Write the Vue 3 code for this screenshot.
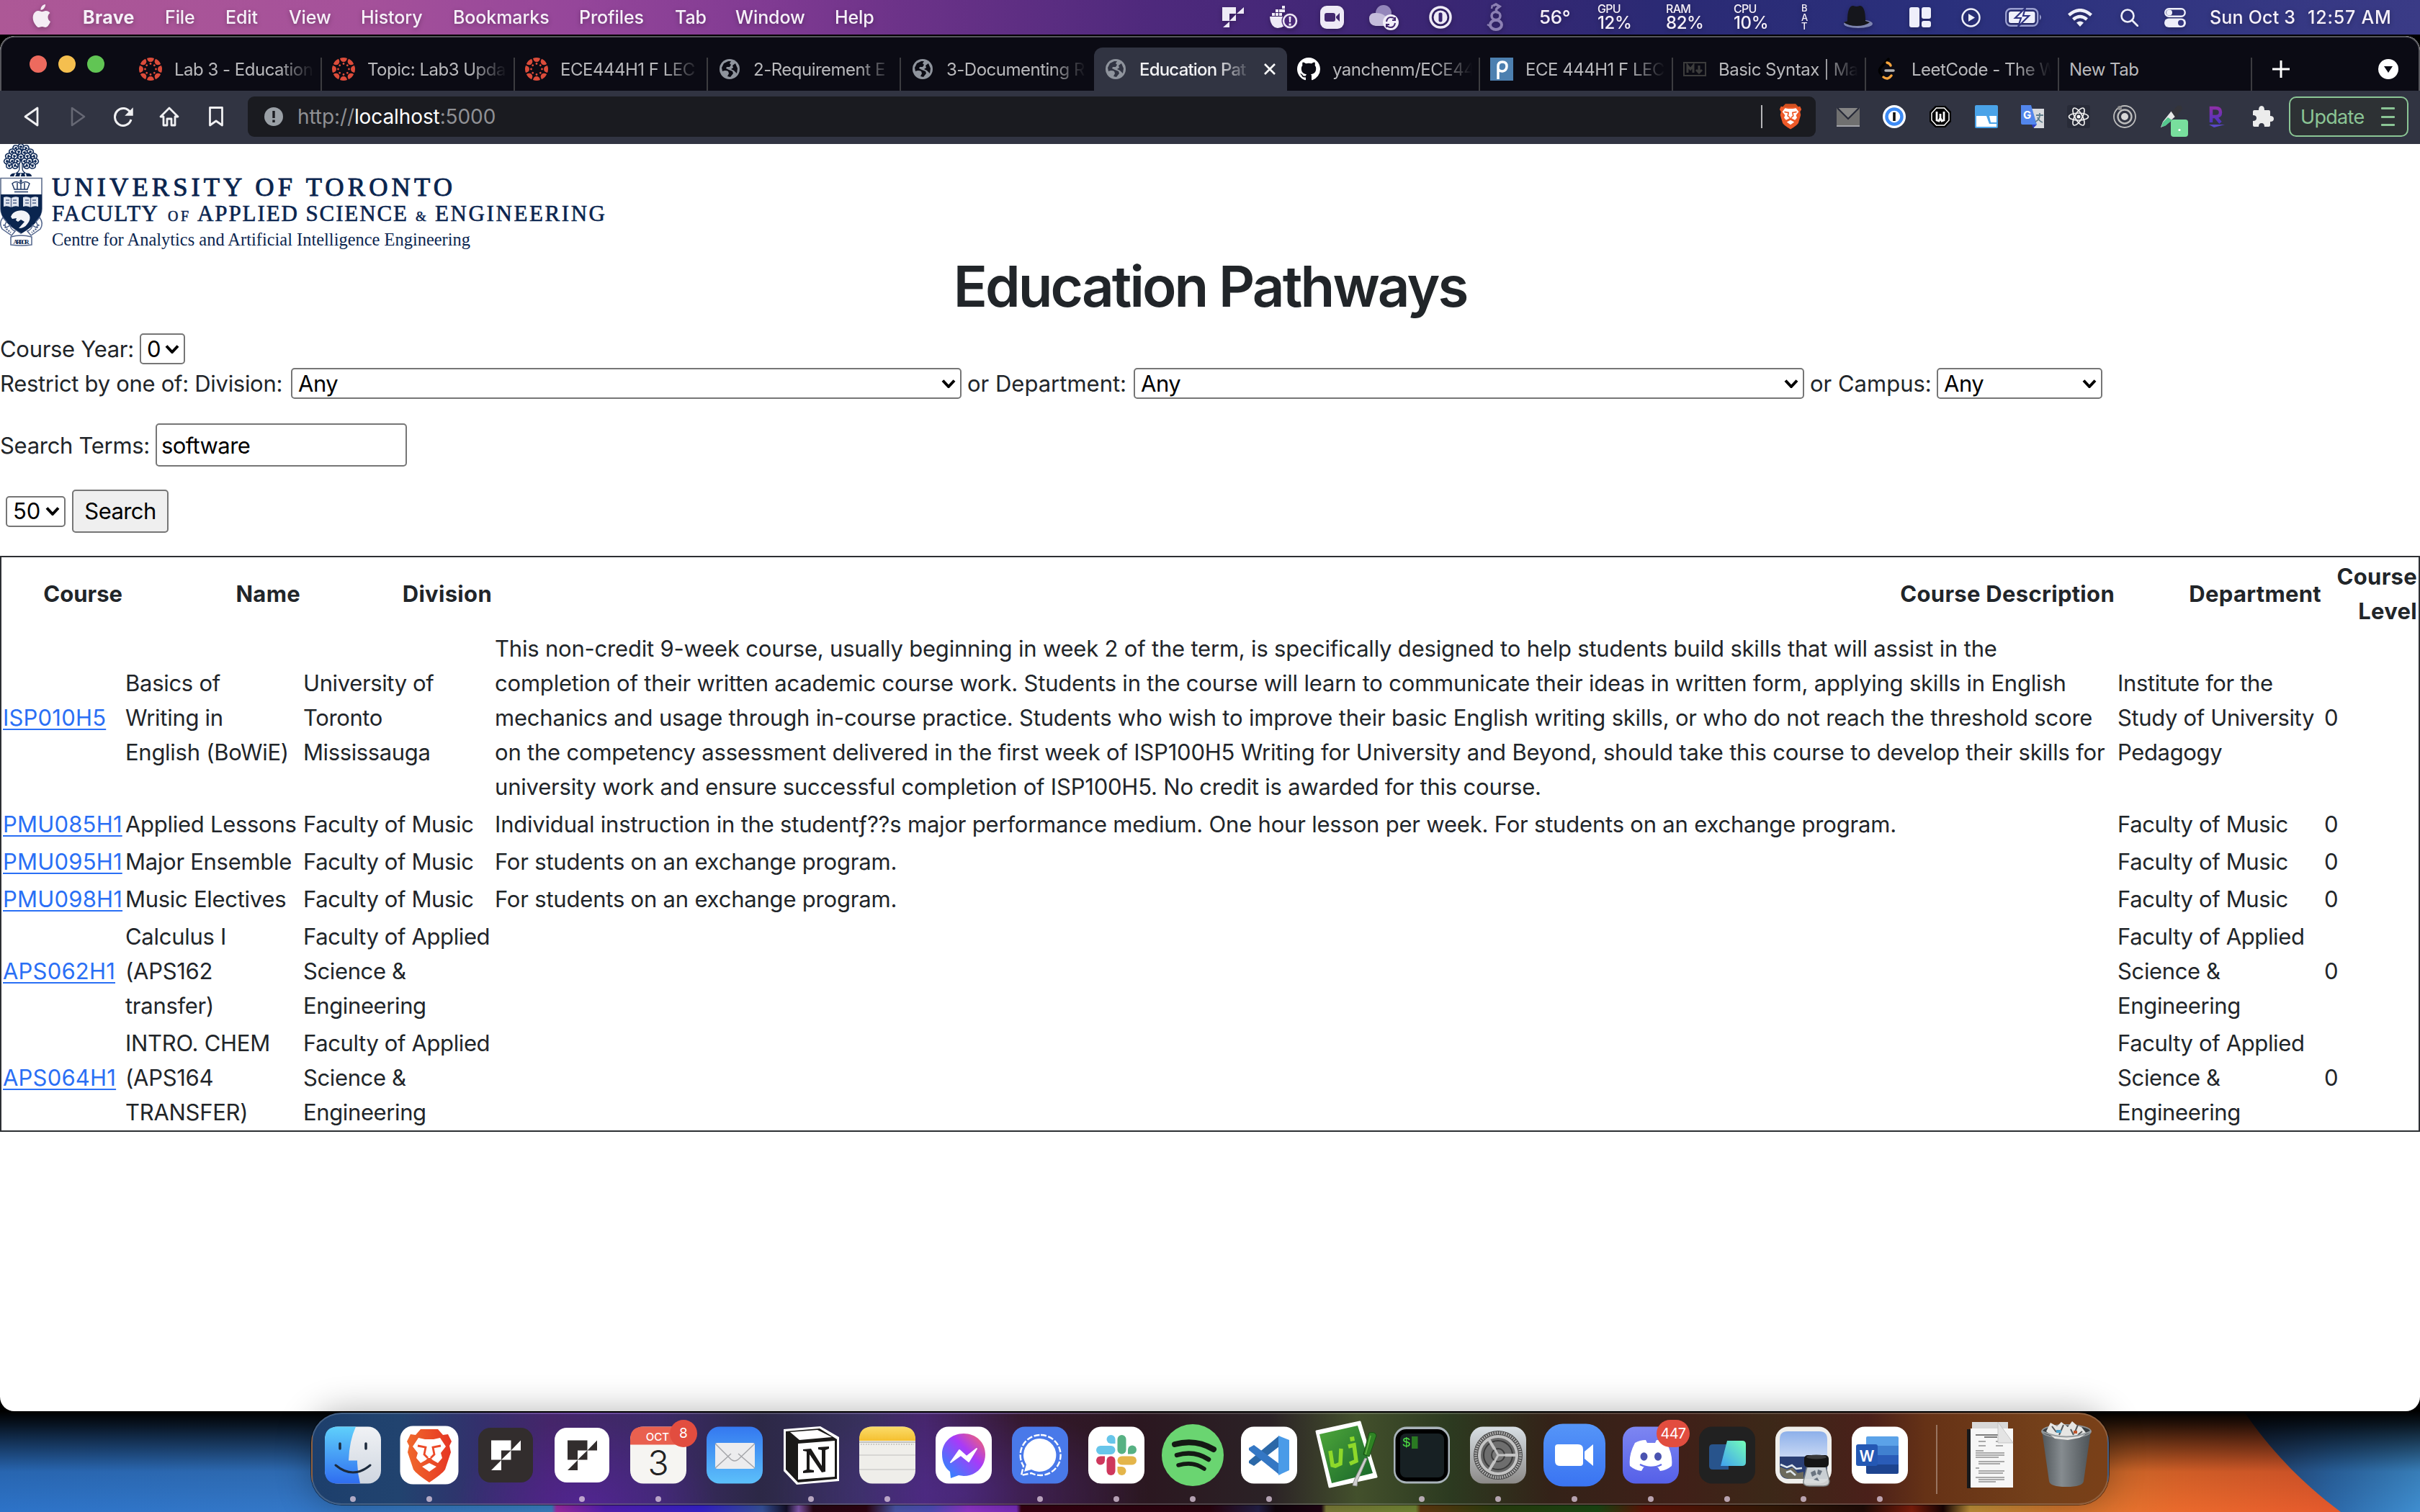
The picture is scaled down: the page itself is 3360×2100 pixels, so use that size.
<script setup>
const menus = ['File', 'Edit', 'View', 'History', 'Bookmarks', 'Profiles', 'Tab', 'Window', 'Help']

const tabs = [
  { icon: 'canvas', title: 'Lab 3 - Education' },
  { icon: 'canvas', title: 'Topic: Lab3 Upda' },
  { icon: 'canvas', title: 'ECE444H1 F LEC' },
  { icon: 'globe', title: '2-Requirement E' },
  { icon: 'globe', title: '3-Documenting R' },
  { icon: 'globe', title: 'Education Pat', active: true },
  { icon: 'github', title: 'yanchenm/ECE44' },
  { icon: 'piazza', title: 'ECE 444H1 F LEC' },
  { icon: 'markdown', title: 'Basic Syntax | Ma' },
  { icon: 'leetcode', title: 'LeetCode - The W' },
  { icon: '', title: 'New Tab' }
]

const columns = ['Course', 'Name', 'Division', 'Course Description', 'Department', 'Course Level']

const aps = ['Faculty of Applied', 'Science &', 'Engineering']
const courses = [
  {
    code: 'ISP010H5',
    name: ['Basics of', 'Writing in', 'English (BoWiE)'],
    division: ['University of', 'Toronto', 'Mississauga'],
    description: [
      'This non-credit 9-week course, usually beginning in week 2 of the term, is specifically designed to help students build skills that will assist in the',
      'completion of their written academic course work. Students in the course will learn to communicate their ideas in written form, applying skills in English',
      'mechanics and usage through in-course practice. Students who wish to improve their basic English writing skills, or who do not reach the threshold score',
      'on the competency assessment delivered in the first week of ISP100H5 Writing for University and Beyond, should take this course to develop their skills for',
      'university work and ensure successful completion of ISP100H5. No credit is awarded for this course.'
    ],
    department: ['Institute for the', 'Study of University', 'Pedagogy'],
    level: 0
  },
  {
    code: 'PMU085H1', name: ['Applied Lessons'], division: ['Faculty of Music'],
    description: ['Individual instruction in the studentƒ??s major performance medium. One hour lesson per week. For students on an exchange program.'],
    department: ['Faculty of Music'], level: 0
  },
  { code: 'PMU095H1', name: ['Major Ensemble'], division: ['Faculty of Music'], description: ['For students on an exchange program.'], department: ['Faculty of Music'], level: 0 },
  { code: 'PMU098H1', name: ['Music Electives'], division: ['Faculty of Music'], description: ['For students on an exchange program.'], department: ['Faculty of Music'], level: 0 },
  { code: 'APS062H1', name: ['Calculus I', '(APS162', 'transfer)'], division: aps, description: [], department: aps, level: 0 },
  { code: 'APS064H1', name: ['INTRO. CHEM', '(APS164', 'TRANSFER)'], division: aps, description: [], department: aps, level: 0 }
]

const dockApps = [
  { id: 'finder', on: true }, { id: 'brave', on: true }, { id: 'fdark' }, { id: 'flight', on: true },
  { id: 'calendar', on: true }, { id: 'mail' }, { id: 'notion', on: true }, { id: 'notes', on: true },
  { id: 'messenger' }, { id: 'signal', on: true }, { id: 'slack', on: true }, { id: 'spotify', on: true },
  { id: 'vscode', on: true }, { id: 'macvim' }, { id: 'terminal', on: true }, { id: 'settings', on: true },
  { id: 'zoom', on: true }, { id: 'discord', on: true }, { id: 'cards', on: true }, { id: 'preview', on: true },
  { id: 'word', on: true }
]
const spokes = Array.from({ length: 8 }, (_, i) => i * 45)

// Leaf clusters of the crest's oak tree: [x, y, rotation]
const leaves = [
  [29, 4, 0], [22, 6, -30], [36, 6, 30], [17, 11, -60], [26, 11, 20], [34, 12, -20], [42, 11, 60],
  [12, 17, -80], [20, 17, 10], [29, 18, 0], [38, 17, -10], [47, 17, 80], [10, 24, -95], [17, 24, -40],
  [24, 24, 30], [34, 24, -30], [41, 24, 40], [49, 24, 95], [13, 30, -120], [21, 30, -60], [37, 30, 60], [45, 30, 120]
]
</script>

<template>
  <div class="desktop">
    <svg class="wallpaper" viewBox="0 0 3360 140" preserveAspectRatio="none" aria-hidden="true">
      <defs>
        <linearGradient id="wp" x1="0" x2="3360" y1="0" y2="0" gradientUnits="userSpaceOnUse">
          <stop offset="0" stop-color="#2d73c8" /><stop offset=".13" stop-color="#3478c8" />
          <stop offset=".228" stop-color="#3d86cc" /><stop offset=".23" stop-color="#a82db0" />
          <stop offset=".25" stop-color="#5a22c0" /><stop offset=".29" stop-color="#3a24dc" />
          <stop offset=".315" stop-color="#3a58a8" /><stop offset=".325" stop-color="#15102a" />
          <stop offset=".33" stop-color="#8a5cb8" /><stop offset=".336" stop-color="#2a0614" />
          <stop offset=".358" stop-color="#300412" /><stop offset=".37" stop-color="#4f5cb4" />
          <stop offset=".385" stop-color="#5452c4" /><stop offset=".4" stop-color="#9a38d8" />
          <stop offset=".42" stop-color="#8030c8" /><stop offset=".422" stop-color="#3a0212" />
          <stop offset=".5" stop-color="#2c0410" /><stop offset=".52" stop-color="#25204a" />
          <stop offset=".527" stop-color="#12040c" /><stop offset=".546" stop-color="#200414" />
          <stop offset=".548" stop-color="#84843c" /><stop offset=".585" stop-color="#7a9038" />
          <stop offset=".587" stop-color="#683c10" /><stop offset=".62" stop-color="#2c4410" />
          <stop offset=".66" stop-color="#1c4c14" /><stop offset=".68" stop-color="#681408" />
          <stop offset=".73" stop-color="#3a1c08" /><stop offset=".77" stop-color="#200c08" />
          <stop offset=".79" stop-color="#88200c" /><stop offset=".803" stop-color="#180404" />
          <stop offset=".814" stop-color="#c8983c" /><stop offset=".85" stop-color="#dc7c30" />
          <stop offset=".9" stop-color="#ea6a2c" /><stop offset="1" stop-color="#e2502c" />
        </linearGradient>
        <linearGradient id="wpShade" x1="0" x2="0" y1="0" y2="1">
          <stop offset="0" stop-color="#000" /><stop offset=".12" stop-color="#000" stop-opacity=".85" />
          <stop offset=".6" stop-color="#000" stop-opacity=".12" /><stop offset="1" stop-color="#000" stop-opacity="0" />
        </linearGradient>
        <linearGradient id="wpBlue" x1="0" x2="1" y1="0" y2="0">
          <stop offset="0" stop-color="#24406e" /><stop offset=".5" stop-color="#2c68a8" /><stop offset="1" stop-color="#3f8ed0" />
        </linearGradient>
      </defs>
      <rect width="3360" height="140" fill="url(#wp)" />
      <path d="M3115 0C3150 50 3190 95 3250 140H3360V0Z" fill="url(#wpBlue)" />
      <rect width="3360" height="140" fill="url(#wpShade)" />
    </svg>

    <header class="menubar">
      <nav class="menus">
        <svg class="apple" width="28" height="34" viewBox="0 0 28 34" fill="#f4ecf4">
          <path d="M19 1c.3 2-.6 4-1.800 5.400C16 7.800 14.200 8.800 12.500 8.700 12.200 6.700 13.100 4.800 14.200 3.500 15.400 2.100 17.400 1.100 19 1zM26 25c-1 2.200-1.500 3.200-2.700 5-1.500 2.300-3 3-4.300 3-1.700 0-2.300-1-4.500-1s-2.900 1-4.500 1c-1.600 0-3-1-4.400-3.100C1.800 25.700.4 19 2.800 14.300 4 12 6.400 10 9.200 10c2 0 3.600 1.200 5 1.200 1.300 0 3.300-1.400 5.800-1.300 1 .1 3.600.4 5.500 3-3.600 2.200-4.500 8.700.500 12.100z" />
        </svg>
        <b>Brave</b>
        <span v-for="m in menus" :key="m">{{ m }}</span>
      </nav>
      <div class="status">
        <svg width="30" height="28" viewBox="0 0 30 28" fill="#eeeaf6"><path d="M0 0h19v9h-9v10H0zM30 0v9H20zM19 10v9h-9zM10 20v8H1z" /></svg>
        <svg width="40" height="34" viewBox="0 0 40 34" fill="#eeeaf6">
          <path d="M3 11h4v4H3zM8 11h4v4H8zM13 11h4v4h-4zM8 6h4v4H8zM13 6h4v4h-4zM17 1h4v4h-4zM17 6h4v4h-4zM0 16h22l2 4-4 9q-4 3-9 3Q1 31 0 16z" />
          <circle cx="28" cy="22" r="11.500" fill="#4a2878" /><circle cx="28" cy="22" r="9" fill="none" stroke="#eeeaf6" stroke-width="2.500" /><path d="M26.500 16h3l-.5 8h-2zM26.500 25.500h3v3h-3z" />
        </svg>
        <svg width="33" height="32" viewBox="0 0 33 32"><rect width="33" height="32" rx="9" fill="#eeeaf6" /><rect x="6" y="10" width="15" height="12" rx="3" fill="#43286f" /><path d="M22 15l5-5v12l-5-5z" fill="#43286f" /></svg>
        <svg width="42" height="36" viewBox="0 0 42 36"><circle cx="20" cy="12" r="11" fill="#9486bb" /><path d="M10 12q10 0 16 8l-6 10H9Q0 29 0 20t10-8z" fill="#c5bddb" /><circle cx="30" cy="25" r="11" fill="#f1eef8" /><path d="M24 24q1-6 6-6t6 4M36 26q-1 6-6 6t-6-4M36 18v4h-4M24 32v-4h4" fill="none" stroke="#43286f" stroke-width="2" /></svg>
        <svg width="32" height="32" viewBox="0 0 32 32"><circle cx="16" cy="16" r="14" fill="none" stroke="#eeeaf6" stroke-width="3.500" /><circle cx="16" cy="16" r="9.500" fill="#eeeaf6" /><rect x="13.500" y="9.500" width="5" height="13" rx="2" fill="#38256f" /></svg>
        <svg width="24" height="40" viewBox="0 0 24 40" fill="none" stroke="#8c80b4">
          <path d="M9 4l4-2 5 3-4 3q-2 3 2 6" stroke-width="3.500" /><ellipse cx="13" cy="18" rx="6" ry="5.500" stroke-width="3.500" /><ellipse cx="13" cy="30.500" rx="8" ry="6.500" stroke-width="4" /><path d="M1 30l5 3M8 3l-1 5" stroke-width="2.500" />
        </svg>
        <span class="temp">56°</span>
        <span class="stat"><small>GPU</small>12%</span>
        <span class="stat"><small>RAM</small>82%</span>
        <span class="stat"><small>CPU</small>10%</span>
        <span class="bat"><i>B</i><i>A</i><i>T</i></span>
        <svg width="42" height="32" viewBox="0 0 42 32"><ellipse cx="22" cy="25" rx="20" ry="6" fill="#7d84b0" /><path d="M2 23l5-2Q7 0 15 0q5 2 9 0 8 0 8 21l6 2q-6 5-18 5T2 23z" fill="#15161c" /></svg>
        <svg width="30" height="28" viewBox="0 0 30 28" fill="#eeeffa"><rect width="14" height="28" rx="3" /><rect x="17" width="13" height="16" rx="3" /><rect x="17" y="19" width="13" height="9" rx="3" /></svg>
        <svg width="27" height="27" viewBox="0 0 27 27"><circle cx="13.500" cy="13.500" r="12" fill="none" stroke="#eeeffa" stroke-width="2.500" /><path d="M10 8l9 5.500-9 5.500z" fill="#eeeffa" /></svg>
        <svg width="52" height="26" viewBox="0 0 52 26"><rect x="1.200" y="1.200" width="44" height="23.500" rx="6.500" fill="none" stroke="#9a9fd0" stroke-width="2.400" /><rect x="5" y="5" width="36.500" height="16" rx="3" fill="#eeeffa" /><path d="M48 9q4 4 0 8z" fill="#9a9fd0" /><path d="M28 0L14 14h8l-4 12 15-15h-8z" fill="#eeeffa" stroke="#2e3280" stroke-width="2.200" /></svg>
        <svg width="34" height="25" viewBox="0 0 34 25" fill="none" stroke="#eeeffa" stroke-width="4.500"><path d="M1.500 9q15.500-13.500 31 0" /><path d="M7.500 15q9.500-8 19 0" /><path d="M17 25l-5-5.500q5-4 10 0z" fill="#eeeffa" stroke="none" /></svg>
        <svg width="25" height="25" viewBox="0 0 25 25" fill="none" stroke="#eeeffa" stroke-width="2.600"><circle cx="10" cy="10" r="8.500" /><path d="M16 16l8 8" stroke-linecap="round" /></svg>
        <svg width="30" height="27" viewBox="0 0 30 27"><rect x="1.200" y="1.200" width="27.500" height="10.500" rx="5.250" fill="none" stroke="#eeeffa" stroke-width="2.400" /><circle cx="7" cy="6.500" r="4" fill="#eeeffa" /><rect y="14.500" width="30" height="12.500" rx="6.250" fill="#eeeffa" /><circle cx="23" cy="20.700" r="4" fill="#34367f" /></svg>
        <span class="clock">Sun Oct 3</span>
        <span class="clock time">12:57 AM</span>
      </div>
    </header>

    <main class="window">
      <div class="tabstrip">
        <div class="lights"><i class="close" /><i class="min" /><i class="max" /></div>
        <div class="tabs">
          <div v-for="(t, i) in tabs" :key="i" class="tab" :class="{ active: t.active, bare: i === 4 || i === 5, plain: !t.icon }">
            <svg v-if="t.icon === 'canvas'" width="32" height="32" viewBox="-16 -16 32 32" fill="#dc4c3a">
              <g v-for="a in spokes" :key="a" :transform="`rotate(${a})`"><path d="M-5-15Q0-17 5-15 4-10 0-10T-5-15z" /><circle cy="-7.500" r="1.400" /></g>
            </svg>
            <svg v-else-if="t.icon === 'globe'" class="globe" width="28" height="28" viewBox="0 0 28 28">
              <circle cx="14" cy="14" r="14" fill="#8f949d" />
              <path d="M12 3L6 6 3 12 4 17Q8 15 12 17L13 20 11 24 15 25 19 20 18 17 13 15 9 13 10 11 14 11 16 8 14 6 16 3zM22 6L18 9 19 12 16 14 20 16 24 20 25 13z" :fill="t.active ? '#313442' : '#0b0b14'" />
            </svg>
            <svg v-else-if="t.icon === 'github'" width="32" height="32" viewBox="0 0 16 16" fill="#fff"><path d="M8 0C3.580 0 0 3.580 0 8c0 3.540 2.290 6.530 5.470 7.590.4.070.55-.17.55-.38 0-.19-.01-.82-.01-1.490-2.010.37-2.530-.49-2.690-.94-.09-.23-.48-.94-.82-1.130-.28-.15-.68-.52-.01-.53.63-.01 1.080.58 1.230.82.72 1.210 1.870.87 2.330.66.07-.52.28-.87.51-1.070-1.780-.2-3.640-.89-3.640-3.950 0-.87.31-1.590.82-2.150-.08-.2-.36-1.020.08-2.120 0 0 .67-.21 2.200.82a7.600 7.600 0 014 0c1.530-1.040 2.200-.82 2.200-.82.44 1.100.16 1.920.08 2.120.51.56.82 1.270.82 2.150 0 3.070-1.870 3.750-3.650 3.950.29.25.54.73.54 1.480 0 1.070-.01 1.930-.01 2.200 0 .21.15.46.55.38A8.010 8.010 0 0016 8c0-4.420-3.580-8-8-8z" /></svg>
            <svg v-else-if="t.icon === 'piazza'" width="32" height="32" viewBox="0 0 32 32"><rect width="32" height="32" fill="#4d80b0" /><path d="M11 30V12q0-6 6-6t6 6-6 7q-4 0-6-3" fill="none" stroke="#fff" stroke-width="3.500" /></svg>
            <svg v-else-if="t.icon === 'markdown'" width="32" height="20" viewBox="0 0 32 20" fill="none" stroke="#3c3c3c"><rect x="1" y="1" width="30" height="18" stroke-width="2" /><path d="M6 15V5l4 5 4-5v10M22 5v9M18 11l4 4 4-4" stroke-width="3" /></svg>
            <svg v-else-if="t.icon === 'leetcode'" width="32" height="32" viewBox="0 0 32 32" fill="none" stroke-width="3.500" stroke-linecap="round"><path d="M17 2L6 14q-3 4 0 8l4 5" stroke="#000" /><path d="M15 7q4 1 5 4M10 27q6 5 11-2" stroke="#f5a33b" /><path d="M13 18h11" stroke="#b3b3b3" /></svg>
            <span class="title">{{ t.title }}</span>
            <svg v-if="t.active" class="x" width="16" height="16" viewBox="0 0 16 16" stroke="#fff" stroke-width="2.600"><path d="M1 1l14 14M15 1L1 15" /></svg>
          </div>
        </div>
        <svg class="plus" width="24" height="24" viewBox="0 0 24 24" stroke="#fff" stroke-width="3"><path d="M12 0v24M0 12h24" /></svg>
        <svg class="drop" width="28" height="28" viewBox="0 0 28 28"><circle cx="14" cy="14" r="14" fill="#fff" /><path d="M8 10h12l-6 9z" fill="#0b0b14" /></svg>
      </div>

      <div class="toolbar">
        <div class="navicons">
          <svg width="28" height="28" viewBox="0 0 28 28" fill="none" stroke="#f0f0f2" stroke-width="2.800" stroke-linejoin="round"><path d="M20 2v24L3 14z" /></svg>
          <svg width="28" height="28" viewBox="0 0 28 28" fill="none" stroke="#666874" stroke-width="2.600" stroke-linejoin="round"><path d="M4 2v24l17-12z" /></svg>
          <svg width="30" height="28" viewBox="0 0 30 28" fill="none" stroke="#f0f0f2" stroke-width="3"><path d="M24 8.500A11.500 12 0 1 0 25 18" /><path d="M27 3v9h-9z" fill="#f0f0f2" stroke-width="1.500" /></svg>
          <svg width="28" height="28" viewBox="0 0 28 28" fill="none" stroke="#f0f0f2" stroke-width="2.800" stroke-linejoin="round"><path d="M2 14L14 2l12 12h-4v12h-5v-9h-6v9H6V14z" /></svg>
          <svg width="20" height="28" viewBox="0 0 20 28" fill="none" stroke="#f0f0f2" stroke-width="2.800" stroke-linejoin="round"><path d="M1.500 1.500h17v24.500L10 20l-8.500 6z" /></svg>
        </div>
        <div class="urlbar">
          <svg width="26" height="26" viewBox="0 0 26 26"><circle cx="13" cy="13" r="13" fill="#9aa0a6" /><path d="M11.300 5h3.400v10h-3.400zM11.300 17.500h3.400V21h-3.400z" fill="#1a1b20" /></svg>
          <span class="url">http://<b>localhost</b>:5000</span>
          <i class="bar" />
          <svg width="32" height="36" viewBox="-32 -37 64 76">
            <path d="M-15-36H15L22-28 28-29 32-20 28-13 30-4 23 20Q20 26 0 38-20 26-23 20L-30-4-28-13-32-20-28-29-22-28z" fill="#ee5a29" />
            <path d="M-15-36H15L24-27H-24z" fill="#d2501f" />
            <path d="M-24-13L-16-24-7-22H7L16-24 24-13 16-3 19 4 13 11 5 7 2 4H-2L-5 7-13 11-19 4-16-3zM0 11L11 17 0 25-11 17z" fill="#fff" />
            <path d="M-18-13L-6-11-8-1-2 4M18-13L6-11 8-1 2 4" fill="none" stroke="#ee5a29" stroke-width="3.500" />
          </svg>
        </div>
        <div class="exts">
          <svg width="32" height="32" viewBox="0 0 32 32"><rect y="4" width="32" height="26" fill="#707070" /><path d="M1 4l15 15L31 4" fill="#858585" stroke="#272a38" stroke-width="2.200" /><path d="M0 29h32" stroke="#a3a4aa" stroke-width="2" /></svg>
          <svg width="32" height="32" viewBox="0 0 32 32"><circle cx="16" cy="16" r="16" fill="#fff" /><circle cx="16" cy="16" r="10.500" fill="none" stroke="#3d8bf5" stroke-width="4.500" /><rect x="14.200" y="10" width="3.600" height="12" fill="#111" /></svg>
          <svg width="32" height="32" viewBox="0 0 32 32"><path d="M9 1h14l8 8v14l-8 8H9l-8-8V9z" fill="#000" /><path d="M10.500 4h11l6.500 7v10l-6.500 7h-11L4 21V11z" fill="none" stroke="#fff" stroke-width="1.500" /><path d="M11 9v12l3 1 2-4 2 4 3-1V9M16 18v-6" fill="none" stroke="#fff" stroke-width="2.800" /></svg>
          <svg width="32" height="32" viewBox="0 0 32 32"><rect width="32" height="32" rx="2" fill="#4aa3e8" /><path d="M2 15h14l4 11h10v4H2zM20 15h10v9h-8z" fill="#fff" /></svg>
          <svg width="32" height="32" viewBox="0 0 32 32"><path d="M12 5h20v27H18z" fill="#d8dade" /><path d="M0 0h14l8 27H2q-2 0-2-2z" fill="#5286ec" /><path d="M15 27h7l-5 5z" fill="#2d3cc0" /><text x="3" y="19" font-family="Inter,sans-serif" font-weight="700" font-size="15" fill="#fff">G</text><path d="M21 14h10M26 11v3q0 6-6 9M23 17q2 5 7 7" fill="none" stroke="#607d8b" stroke-width="1.800" /></svg>
          <svg width="32" height="32" viewBox="-16 -16 32 32"><rect x="-16" y="-16" width="32" height="32" rx="3" fill="#282b38" /><g fill="none" stroke="#eee" stroke-width="1.700"><ellipse rx="13.500" ry="5" /><ellipse rx="13.500" ry="5" transform="rotate(60)" /><ellipse rx="13.500" ry="5" transform="rotate(120)" /></g><circle r="2.500" fill="#fff" /></svg>
          <svg width="32" height="32" viewBox="-16 -16 32 32" fill="none" stroke="#bcbcbc" stroke-width="1.800"><circle r="15" /><circle r="9.500" stroke-width="2.400" /><circle r="5" fill="#d8d8d8" stroke="none" /><circle cx="-7" cy="-12" r="3" fill="#8e8e90" stroke="none" /></svg>
          <span class="picker"><svg width="40" height="44" viewBox="0 0 40 44"><path d="M17 8l7 6L9 28l-7 3 3-8z" fill="#e6e8e6" /><path d="M12 17l6 4-10 8-5 1 2-6z" fill="#55c78e" /><path d="M16 8l4-1 5-6q7-2 7 5l-6 6v4l-3 2z" fill="#34343a" /><rect x="16" y="20" width="24" height="24" rx="4" fill="#78df9d" /><circle cx="28" cy="34.500" r="1.600" fill="#fff" /></svg></span>
          <svg width="32" height="32" viewBox="0 0 32 32"><defs><linearGradient id="rk" x2="0" y2="1"><stop stop-color="#8b2fa8" /><stop offset="1" stop-color="#4b35c0" /></linearGradient></defs><path d="M8 24V4h6q7 0 7 6t-7 6H9M14 16l7 8.500" fill="none" stroke="url(#rk)" stroke-width="4.500" /><path d="M5 27h22l-15 4z" fill="#5a48c8" /></svg>
          <svg width="32" height="32" viewBox="0 0 32 32" fill="#ececec"><path d="M2 9q0-2 2-2h6q0-6 4-6t4 6h6q2 0 2 2v6q5 0 5 4t-5 4v5q0 2-2 2h-6q0-5-4-5t-4 5H4q-2 0-2-2v-6q5 0 5-4t-5-4z" /></svg>
        </div>
        <div class="update">Update<span class="lines"><i /><i /><i /></span></div>
      </div>

      <section class="page">
        <svg class="logo" width="860" height="150" viewBox="0 0 860 150" fill="#0a254f">
          <g fill="#fff" stroke="#0f2a58" stroke-width="1.500">
            <path d="M27 22v12q0 4-5 7h14q-5-3-5-7V22z" stroke-width="1.300" />
            <g v-for="(l, i) in leaves" :key="i" :transform="`translate(${l[0]} ${l[1]}) rotate(${l[2]})`"><path d="M0 4.500Q-5 3-4-1-3-4 0-4.500 3-4 4-1 5 3 0 4.500zM0 4V-2M0 1l-2-2M0 1l2-2" /></g>
          </g>
          <path d="M14 45q0-5 8-4.500 4 .5 7 0 3 .5 7 0 8-.5 8 4.500z" />
          <path d="M20 45l2-4M28 45l1-4M36 45l-1-4" stroke="#fff" stroke-width="1.800" />
          <path d="M1 47.500h57V90q0 16-29 34Q1 106 1 90z" fill="#fff" stroke="#5f6f8e" stroke-width="1.600" />
          <path d="M1 70h57v20q0 18-28 34Q1 108 1 90z" />
          <g fill="none" stroke="#223a66" stroke-width="1.500"><path d="M20 63l-3-8q5-5 12 0 7-5 12 0l-3 8zM20 66.500h19M29 55v8M24 54v9M34 54v9M27 51.500h4M29 49v6" /></g>
          <path d="M5 74q5-2 10.500 1 5.500-3 10.500-1v13q-5-2-10.500 1-5.500-3-10.500-1zM32 74q5-2 10.500 1 5.500-3 10.500-1v13q-5-2-10.500 1-5.500-3-10.500-1z" fill="#dfe4ee" />
          <path d="M15.500 75v13M42.500 75v13M8 78h5M8 82h5M18 78h5M18 82h5M35 78h5M35 82h5M45 78h5M45 82h5" stroke="#51648c" stroke-width="1.300" />
          <path d="M15 101q2-6 9-8 12-3 17 6 2 6-3 12-4 6-12 6l8-9-5-3-4 3-3-2 1-3-6 1z" fill="#f2f4f8" />
          <g fill="#fff" stroke="#52658c" stroke-width="1.500">
            <path d="M4 102q-6 8-1 16l13 9 5-6q-6-2-7-8L9 116q-4-2 0-8z" />
            <path d="M55 102q6 8 1 16l-13 9-5-6q6-2 7-8l5 3q4-2 0-8z" />
            <path d="M15 129q14-4 29 0v11q-14 2-29 0z" />
          </g>
          <path d="M5 112l4 6 6 5M54 112l-4 6-6 5" fill="none" stroke="#52658c" stroke-width="2.500" stroke-dasharray="2 1.500" />
          <text x="18.500" y="138.500" font-size="8.500" textLength="22" font-weight="700">ARBOR</text>
          <text x="72" y="72" font-size="36.500" textLength="556" stroke="#0a254f" stroke-width=".9">UNIVERSITY OF TORONTO</text>
          <text x="72" y="107" font-size="31" textLength="147" stroke="#0a254f" stroke-width=".6">FACULTY</text>
          <text x="233" y="107" font-size="20" textLength="29" stroke="#0a254f" stroke-width=".5">OF</text>
          <text x="274" y="107" font-size="31" textLength="291" stroke="#0a254f" stroke-width=".6">APPLIED SCIENCE</text>
          <text x="577" y="107" font-size="19" stroke="#0a254f" stroke-width=".5">&amp;</text>
          <text x="604" y="107" font-size="31" textLength="236" stroke="#0a254f" stroke-width=".6">ENGINEERING</text>
          <text x="72" y="141" font-size="26" textLength="581" lengthAdjust="spacingAndGlyphs">Centre for Analytics and Artificial Intelligence Engineering</text>
        </svg>
        <h1>Education Pathways</h1>

        <div class="row year"><label>Course Year:</label><span class="select">0<svg viewBox="0 0 20 12"><path d="M2 1.500l8 8.500 8-8.500" /></svg></span></div>
        <div class="row restrict">
          <label>Restrict by one of: Division:</label><span class="select">Any<svg viewBox="0 0 20 12"><path d="M2 1.500l8 8.500 8-8.500" /></svg></span>
          <label class="or">or Department:</label><span class="select">Any<svg viewBox="0 0 20 12"><path d="M2 1.500l8 8.500 8-8.500" /></svg></span>
          <label class="or">or Campus:</label><span class="select">Any<svg viewBox="0 0 20 12"><path d="M2 1.500l8 8.500 8-8.500" /></svg></span>
        </div>
        <div class="row terms"><label>Search Terms:</label><input type="text" value="software" /></div>
        <div class="row submit"><span class="select">50<svg viewBox="0 0 20 12"><path d="M2 1.500l8 8.500 8-8.500" /></svg></span><button type="button">Search</button></div>

        <table>
          <colgroup><col class="c1" /><col class="c2" /><col class="c3" /><col class="c4" /><col class="c5" /><col class="c6" /></colgroup>
          <thead><tr><th v-for="c in columns" :key="c">{{ c }}</th></tr></thead>
          <tbody>
            <tr v-for="c in courses" :key="c.code">
              <td class="code"><a>{{ c.code }}</a></td>
              <td class="name"><div v-for="l in c.name" :key="l">{{ l }}</div></td>
              <td class="division"><div v-for="l in c.division" :key="l">{{ l }}</div></td>
              <td><div v-for="l in c.description" :key="l">{{ l }}</div></td>
              <td class="department"><div v-for="l in c.department" :key="l">{{ l }}</div></td>
              <td>{{ c.level }}</td>
            </tr>
          </tbody>
        </table>
      </section>
    </main>

    <footer class="dock">
      <svg width="0" height="0" class="defs">
        <defs>
          <linearGradient id="gBlue" x2="0" y2="1"><stop stop-color="#5fd0fb" /><stop offset="1" stop-color="#2f6df0" /></linearGradient>
          <linearGradient id="gMail" x2="0" y2="1"><stop stop-color="#3478f0" /><stop offset="1" stop-color="#5cc0fa" /></linearGradient>
          <linearGradient id="gGrey" x2="0" y2="1"><stop stop-color="#f0f2f5" /><stop offset="1" stop-color="#cfd6e0" /></linearGradient>
          <linearGradient id="gLion"><stop stop-color="#f0692c" /><stop offset="1" stop-color="#e63523" /></linearGradient>
          <linearGradient id="gMsg" x1="1" y1="0" x2="0" y2="1"><stop stop-color="#ff6a5c" /><stop offset=".4" stop-color="#a83af8" /><stop offset="1" stop-color="#1a93ff" /></linearGradient>
          <linearGradient id="gYellow" x2="0" y2="1"><stop stop-color="#fbdc6a" /><stop offset="1" stop-color="#f5c030" /></linearGradient>
          <linearGradient id="gZoom" x2="0" y2="1"><stop stop-color="#5595f8" /><stop offset="1" stop-color="#3a74f2" /></linearGradient>
          <linearGradient id="gDisc" x2="0" y2="1"><stop stop-color="#7d86f2" /><stop offset="1" stop-color="#5560e8" /></linearGradient>
          <linearGradient id="gCard" x1="1" y1="0" x2="0" y2="1"><stop stop-color="#74ffb8" /><stop offset="1" stop-color="#40a0f0" /></linearGradient>
          <linearGradient id="gVim" x1="0" y1="0" x2="1" y2="1"><stop stop-color="#4fa83a" /><stop offset="1" stop-color="#16642a" /></linearGradient>
          <linearGradient id="gSet" x2="0" y2="1"><stop stop-color="#d8dfe4" /><stop offset="1" stop-color="#8c8a88" /></linearGradient>
          <linearGradient id="gSky" x2="0" y2="1"><stop stop-color="#8db0ea" /><stop offset="1" stop-color="#c8d8f4" /></linearGradient>
          <linearGradient id="gBin"><stop stop-color="#50565a" /><stop offset=".4" stop-color="#868c90" /><stop offset="1" stop-color="#4c5256" /></linearGradient>
        </defs>
      </svg>
      <div v-for="d in dockApps" :key="d.id" class="app">
        <svg width="100" height="100" viewBox="-50 -50 100 100">
          <g v-if="d.id === 'finder'">
            <rect x="-39" y="-39.500" width="78" height="79" rx="18" fill="url(#gGrey)" />
            <path d="M4-39.500H-21Q-39-39.500-39-21.500V21.500Q-39 39.500-21 39.500H10Q6 24 6 7.500H-6Q-5-20 4-39.500z" fill="url(#gBlue)" />
            <path d="M-18-16v7M18-16v7" stroke="#1c2a3c" stroke-width="3.500" stroke-linecap="round" /><path d="M-24 14q24 20 48 0" fill="none" stroke="#1c2a3c" stroke-width="3" stroke-linecap="round" />
          </g>
          <g v-else-if="d.id === 'brave'">
            <rect x="-40.500" y="-40.500" width="81" height="81" rx="18" fill="#fff" />
            <path d="M-12-36H12L19-28 26-29 31-19 28-13 30-4 22 20Q18 26 0 38-18 26-22 20L-30-4-28-13-31-19-26-29-19-28z" fill="url(#gLion)" />
            <path d="M-23-12L-15-24-6-22H6L15-24 23-12 16-3 18 4 12 11 5 7 2 4H-2L-5 7-12 11-18 4-16-3zM0 11L10 16 0 23-10 16z" fill="#fff" />
            <path d="M-16-13L-5-11-7-1-2 4M16-13L5-11 7-1 2 4" fill="none" stroke="#ec4a28" stroke-width="2.800" />
          </g>
          <g v-else-if="d.id === 'fdark' || d.id === 'flight'">
            <rect x="-38" y="-38" width="76" height="76" rx="17" :fill="d.id === 'fdark' ? '#322d2d' : '#fff'" />
            <path d="M-20-20.500H7.500V-6.500H-6V6.500H-20zM21-20.500V-6.500H7.500zM7.500-6.500V6.500H-6zM-6 7V21H-20z" :fill="d.id === 'fdark' ? '#fff' : '#322d2d'" />
          </g>
          <g v-else-if="d.id === 'calendar'">
            <rect x="-39" y="-39.500" width="78" height="79" rx="18" fill="#f6f5f2" />
            <path d="M-39-14.500V-21.500Q-39-39.500-21-39.500H21Q39-39.500 39-21.500V-14.500z" fill="#e9604f" />
            <text x="-1" y="-20.500" font-size="15" font-weight="500" text-anchor="middle" fill="#fff">OCT</text>
            <text y="28" font-size="48" font-weight="300" text-anchor="middle" fill="#222">3</text>
          </g>
          <g v-else-if="d.id === 'mail'">
            <rect x="-39" y="-39.500" width="78" height="79" rx="18" fill="url(#gMail)" />
            <rect x="-27" y="-17" width="55" height="36" rx="3" fill="#ececee" /><path d="M-27 18L-5-2M28 18L5-2M-27-16L-5 6q5 4 10 0L28-16" fill="none" stroke="#a5a6aa" stroke-width="1.500" />
          </g>
          <g v-else-if="d.id === 'notion'">
            <path d="M-38-36L13-40 39-25V36L-20 41-38 22z" fill="#fff" />
            <path d="M-35-33L12-37 36-22V33L-18 38-35 20z" fill="#1a1918" />
            <path d="M-29-32L9-35 29-25-16-21z" fill="#fff" /><path d="M-18-16L33-20V30L-18 34z" fill="#fff" />
            <path d="M-11-8l11-1 15 24V-7l-5-1v-3l15-1v3l-5 2v30l-5 1L-2-1V20l6 1v3l-15 1v-3l5-2V-5l-5-1z" fill="#1a1918" />
          </g>
          <g v-else-if="d.id === 'notes'">
            <rect x="-39" y="-39.500" width="78" height="79" rx="18" fill="#efeeea" />
            <path d="M-39-20V-21.500Q-39-39.500-21-39.500H21Q39-39.500 39-21.500V-20z" fill="url(#gYellow)" />
            <path d="M-39-18H39" stroke="#b5b4b0" stroke-width="1.500" /><path d="M-37-15H37" stroke="#b5b4b0" stroke-width="1.500" stroke-dasharray="1.500 2" /><path d="M-39 0H39M-39 20H39" stroke="#cfcecb" stroke-width="1.500" />
          </g>
          <g v-else-if="d.id === 'messenger'">
            <rect x="-39" y="-39.500" width="78" height="79" rx="18" fill="#fff" />
            <path d="M0-30C17-30 30-18 30-1S17 29 0 29L-7 28-18 32-19 23C-26 18-30 9-30-1-30-18-17-30 0-30z" fill="url(#gMsg)" />
            <path d="M-18 10L-6-7 4 2 18-9 7 9-4 0z" fill="#fff" stroke="#fff" stroke-width="2" stroke-linejoin="round" />
          </g>
          <g v-else-if="d.id === 'signal'">
            <rect x="-39" y="-39.500" width="78" height="79" rx="18" fill="#4979e9" />
            <path d="M0-23A23 23 0 1 1-12 20L-22 23-19 13A23 23 0 0 1 0-23z" fill="#fff" /><path d="M1-28A28 28 0 1 1-12 25L-26 28-23 15A28 28 0 0 1 1-28z" fill="none" stroke="#fff" stroke-width="2.400" stroke-dasharray="8 2.500" />
          </g>
          <g v-else-if="d.id === 'slack'">
            <rect x="-39" y="-39.500" width="78" height="79" rx="18" fill="#fff" />
            <path d="M-1.500-16H-7.500A6 6 0 1 1-1.500-22z" fill="#67c5ea" /><rect x="-28" y="-13" width="26.500" height="12" rx="6" fill="#67c5ea" />
            <rect x="1.500" y="-28" width="12" height="26.500" rx="6" fill="#57b183" /><path d="M16-1.500V-7.500A6 6 0 1 1 22-1.500z" fill="#57b183" />
            <path d="M-16 1.500V7.500A6 6 0 1 1-22 1.500z" fill="#ce375c" /><rect x="-13.500" y="1.500" width="12" height="26.500" rx="6" fill="#ce375c" />
            <rect x="1.500" y="1.500" width="26.500" height="12" rx="6" fill="#e4b54a" /><path d="M1.500 16H7.500A6 6 0 1 1 1.500 22z" fill="#e4b54a" />
          </g>
          <g v-else-if="d.id === 'spotify'">
            <circle r="43" fill="#6ad571" /><g fill="none" stroke="#141a14" stroke-linecap="round"><path d="M-25-15q29-8 54 7" stroke-width="8" /><path d="M-22 0q24-7 44 6" stroke-width="6.500" /><path d="M-20 14q21-6 36 5" stroke-width="5.500" /></g>
          </g>
          <g v-else-if="d.id === 'vscode'">
            <rect x="-39" y="-39.500" width="78" height="79" rx="18" fill="#fff" />
            <path d="M14-27V-12L-21 15-28 11V8z" fill="#2b68a8" /><path d="M14 27V12L-21-14-28-10V-7z" fill="#3477c4" /><path d="M13-27L28-21V21L13 28z" fill="#4a9be8" />
          </g>
          <g v-else-if="d.id === 'macvim'">
            <path d="M-40-33L20-46 43 30-22 44z" fill="#fff" stroke="#fff" stroke-width="3" stroke-linejoin="round" /><path d="M-36-29L17-41 38 25-19 39z" fill="url(#gVim)" />
            <path d="M-21-6l3 20 4 1 7-3 1-21M4-12l8-2 3 22-9 4" fill="none" stroke="#8ed82a" stroke-width="5.500" /><path d="M6-25l6-1 1 6-6 1z" fill="#8ed82a" />
            <path d="M33-31q9-2 10 4l-10 29-8-3z" fill="#2f8424" stroke="#174f14" /><path d="M35-27l-7 26" stroke="#68b84a" stroke-width="1.500" /><path d="M27 4l3 1-13 30-1 8-6-1 3-9z" fill="#cfcfcf" stroke="#8d8d8d" />
          </g>
          <g v-else-if="d.id === 'terminal'">
            <rect x="-39" y="-39.500" width="78" height="79" rx="18" fill="#a9b3ba" /><rect x="-36.500" y="-36" width="73" height="72.500" rx="15" fill="#000" /><rect x="-30" y="-30" width="61" height="61" rx="8" fill="#172023" />
            <text x="-27" y="-12" font-size="19" fill="#4fdc45" class="mono">$</text><rect x="-14" y="-26" width="8.500" height="17" fill="#2a7a22" />
          </g>
          <g v-else-if="d.id === 'settings'">
            <rect x="-39" y="-39.500" width="78" height="79" rx="18" fill="url(#gSet)" /><circle r="34" fill="#4b4b4b" /><circle r="31" fill="none" stroke="#b2b2b2" stroke-width="4" stroke-dasharray="1.700 1.500" /><circle r="26" fill="#686868" stroke="#c4c4c4" stroke-width="4" /><circle r="20" fill="#6e6e6e" stroke="#3a3a3a" stroke-width="2" /><path d="M0 0H26M0 0L-13-22M0 0L-13 22" stroke="#c4c4c4" stroke-width="4" /><circle r="9" fill="#777" stroke="#3c3c3c" stroke-width="2" /><path d="M0 0H12M0 0L-6-11M0 0L-6 11" stroke="#c4c4c4" stroke-width="3" />
          </g>
          <g v-else-if="d.id === 'zoom'">
            <rect x="-43" y="-43.500" width="86" height="87" rx="27" fill="url(#gZoom)" /><path d="M-27-11q0-4 4-4H5q7 0 7 7v19q0 4-4 4H-20q-7 0-7-7zM14-5L26-15V15L14 5z" fill="#fff" />
          </g>
          <g v-else-if="d.id === 'discord'">
            <rect x="-39" y="-39.500" width="78" height="79" rx="18" fill="url(#gDisc)" />
            <path d="M-22-17Q-15-21-7-21L-5-17H6L8-21Q15-21 22-17 31 0 29 15 22 21 13 22L10 17H-10L-13 22Q-22 21-29 15-31 0-22-17z" fill="#fff" /><path d="M-15 13q15 8 30 0" fill="none" stroke="#5f69ea" stroke-width="2.500" /><ellipse cx="-9.500" cy="2" rx="5" ry="5.700" fill="#4a53b0" /><ellipse cx="10" cy="2" rx="5" ry="5.700" fill="#4a53b0" />
          </g>
          <g v-else-if="d.id === 'cards'">
            <rect x="-39" y="-39.500" width="78" height="79" rx="18" fill="#212121" /><path d="M-20-15H2V20H-20q-5 0-5-5V-10q0-5 5-5z" fill="#28548c" /><path d="M0-20H21q5 0 5 5V10q0 5-5 5H-9z" fill="url(#gCard)" />
          </g>
          <g v-else-if="d.id === 'preview'">
            <rect x="-39" y="-39.500" width="78" height="79" rx="18" fill="#f0efec" /><path d="M-33-22q0-11 11-11H22q11 0 11 11V3H-33z" fill="url(#gSky)" /><path d="M-33 2H33V33H-20q-13 0-13-13z" fill="#2a3f74" /><path d="M-33 16l10 4 8-3 7 8 8-2v10H-20q-13-2-13-13z" fill="#6c6a5c" /><path d="M-32 13l9 4 7-3 6 5 8-1M-24 24l6-2 7 6" fill="none" stroke="#dfe8ee" stroke-width="2.500" />
            <path d="M5 16h26l5 20q0 7-8 7H8q-9 0-8-7z" fill="#d6dadb" opacity=".93" stroke="#7d8485" stroke-width="1.500" /><path d="M10 24l6-3 2 6-6 3zM20 20l6 2-3 6-4-2zM14 34l5-3 3 5z" fill="#6a7480" /><rect x="1" y="0" width="34" height="17" rx="5" fill="#151515" /><ellipse cx="18" cy="2.500" rx="14" ry="3" fill="#3b3b3b" />
          </g>
          <g v-else-if="d.id === 'word'">
            <rect x="-39" y="-39.500" width="78" height="79" rx="18" fill="#fff" />
            <path d="M-19-24q0-2 2-2H24q2 0 2 2V-13H-19z" fill="#5ba2e8" /><path d="M-19-13H26V0H-19z" fill="#4080d0" /><path d="M-19 0H26V13H-19z" fill="#2a5cb8" /><path d="M-19 13H26V24q0 2-2 2H-17q-2 0-2-2z" fill="#1d4490" />
            <rect x="-33" y="-15" width="30" height="30" rx="3" fill="#2458b4" /><text x="-18" y="8.500" font-size="22" font-weight="600" text-anchor="middle" textLength="21" lengthAdjust="spacingAndGlyphs" fill="#fff">W</text>
          </g>
        </svg>
        <span v-if="d.id === 'calendar'" class="badge">8</span>
        <span v-if="d.id === 'discord'" class="badge wide">447</span>
        <i v-if="d.on" class="dot" />
      </div>
      <i class="divider" />
      <div class="app">
        <svg width="100" height="100" viewBox="-50 -50 100 100">
          <path d="M-25-46H25V-30H-25z" fill="#d8d8d8" /><path d="M-32-36h6V46h-6z" fill="#17181a" /><path d="M-27-37H32V45H-27z" fill="#f6f6f6" />
          <path d="M-20-28H18M-8-25H10" stroke="#555" stroke-width="1.500" /><path d="M-16-19h10M8-19h10M-16-13h10M8-13h10M-20-6h11M-20-3H20M-20 0H20M-20 3H12M-16 9H20M-16 12H14M-20 18h5M-16 22H20M-16 25H18M-20 31H20M-16 34H20M-16 37H8" stroke="#909090" stroke-width="1.300" /><path d="M11-46L32-17H11z" fill="#e4e4e4" stroke="#bcbcbc" stroke-width=".8" />
        </svg>
      </div>
      <div class="app">
        <svg width="100" height="100" viewBox="-50 -50 100 100">
          <path d="M-34-34L-24 36q1 8 24 8t24-8L34-34z" fill="url(#gBin)" /><ellipse cy="-33" rx="34" ry="9" fill="#3a3f42" stroke="#8c9296" stroke-width="2" />
          <path d="M-28-33l6-12 9 5 6-6 9 7 6-8 7 6 6 2 7 9-10 6-16 3-18-2z" fill="#e6e6e4" /><path d="M-20-40l6 8M-4-42l-6 14M6-36l4 8M16-42l-5 12M22-33l-6 5" stroke="#55585a" stroke-width="2" /><path d="M-14-35h7v4h-7z" fill="#4fa0c8" /><path d="M10-34h5v4h-5z" fill="#c0572e" />
          <path d="M-34-33Q0-18 34-33" fill="none" stroke="#969c9f" stroke-width="2" />
        </svg>
      </div>
    </footer>
  </div>
</template>

<style>
html, body { margin: 0; background: #000; }
</style>

<style scoped>
.desktop {
  position: relative;
  width: 3360px;
  height: 2100px;
  overflow: hidden;
  background: #000;
  font-family: Inter, "Liberation Sans", sans-serif;
  display: flex;
  flex-direction: column;
}
.desktop * { box-sizing: border-box; }
.desktop svg { display: block; flex: none; }
.wallpaper { position: absolute; left: 0; bottom: 0; width: 3360px; height: 140px; }

.menubar {
  height: 48px;
  flex: none;
  margin-bottom: 2px;
  display: flex;
  justify-content: space-between;
  color: #f6f0f8;
  font-size: 25px;
  font-weight: 500;
  line-height: 48px;
  background: linear-gradient(90deg, #ad5896 0, #a5519a 500px, #95469a 800px, #7f3a92 1080px, #6d3389 1240px, #4e297c 1600px, #3a2673 2000px, #2b2a74 2300px, #2a307c 2700px, #3a3b86 3360px);
}
.menubar svg, .menubar span, .menubar b { filter: drop-shadow(0 2px 3px rgba(0, 0, 0, .28)); }
.menus {
  display: grid;
  grid-template-columns: 71px 114px 84px 88px 100px 128px 175px 133px 84px 138px 80px;
  padding-left: 44px;
}
.menus b { font-weight: 700; letter-spacing: .4px; }
.menus span { letter-spacing: -.1px; }
.apple { margin-top: 5px; }
.status {
  width: 1663px;
  display: grid;
  align-items: center;
  grid-template-columns: 66px 70px 68px 83px 80px 73px 81px 95px 94px 94px 57px 93px 72px 61px 87px 73px 61px 64px 136px 155px;
}
.temp { font-size: 26px; letter-spacing: -.3px; }
.stat { display: flex; flex-direction: column; font-size: 24px; line-height: 22px; letter-spacing: -.4px; padding-bottom: 2px; }
.stat small { font-size: 16px; line-height: 18px; letter-spacing: -.7px; }
.bat { display: flex; flex-direction: column; font-size: 13px; line-height: 12.500px; }
.bat i { font-style: normal; }
.clock { letter-spacing: .2px; white-space: nowrap; margin-left: -1px; }
.clock.time { letter-spacing: .8px; }

.window {
  position: relative;
  height: 1910px;
  flex: none;
  border-radius: 20px;
  overflow: hidden;
  background: #fff;
}
.tabstrip {
  height: 76px;
  background: #0b0b14;
  border: 2px solid #55555b;
  border-bottom: 0;
  border-radius: 20px 20px 0 0;
  display: flex;
  align-items: flex-start;
}
.lights { width: 177px; padding: 25px 0 0 39px; display: flex; gap: 16px; }
.lights i { width: 24px; height: 24px; border-radius: 50%; }
.close { background: #ed6a5e; }
.min { background: #f5bf4f; }
.max { background: #61c554; }
.tabs { display: flex; padding-top: 14px; }
.tab {
  width: 268px;
  height: 60px;
  padding: 0 11px 0 14px;
  display: flex;
  align-items: center;
  gap: 17px;
  color: #b9b9bc;
  font-size: 24px;
  letter-spacing: -.5px;
  background: linear-gradient(#3c3c40, #3c3c40) right bottom / 2px 46px no-repeat;
}
.tab.bare { background: none; }
.tab.active { background: #313442; border-radius: 12px 12px 0 0; color: #f2f2f4; font-weight: 500; letter-spacing: -.8px; padding-right: 16px; }
.globe { margin: 0 2px; }
.tab .title {
  flex: 1;
  min-width: 0;
  overflow: hidden;
  white-space: nowrap;
  mask-image: linear-gradient(90deg, #000 calc(100% - 50px), transparent);
}
.tab.plain .title { mask-image: none; }
.plus { margin: 32px 0 0 28px; }
.drop { margin: 30px 0 0 123px; }

.toolbar {
  height: 74px;
  background: #313442;
  display: flex;
  align-items: center;
  padding: 0 16px 2px 32px;
}
.navicons { width: 312px; display: grid; grid-template-columns: 64px 61px 64px 69px 54px; }
.urlbar {
  width: 2177px;
  height: 56px;
  border-radius: 9px;
  background: #1a1b20;
  display: flex;
  align-items: center;
  padding: 0 19px 0 23px;
}
.url { flex: 1; margin-left: 20px; font-size: 28px; color: #8f9094; letter-spacing: -.1px; }
.url b { font-weight: 400; color: #fff; }
.bar { width: 2px; height: 32px; background: #b5b5b8; margin-right: 23px; }
.exts { display: flex; gap: 32px; margin: 0 20px 0 29px; align-items: center; }
.picker { width: 32px; height: 32px; }
.update {
  width: 166px;
  height: 56px;
  border: 2px solid #8bc595;
  border-radius: 10px;
  background: #2d3134;
  color: #8bc595;
  font-size: 27px;
  letter-spacing: -.7px;
  display: flex;
  align-items: center;
  justify-content: space-between;
  padding: 0 17px 0 14px;
}
.lines { display: flex; flex-direction: column; gap: 8.500px; }
.lines i { width: 19px; height: 3px; background: #8bc595; border-radius: 1px; }

.page { color: #212529; font-size: 31px; line-height: 48px; letter-spacing: -.2px; height: 1760px; }
.logo { font-family: "Liberation Serif", serif; letter-spacing: 0; }
h1 { margin: 0 0 14px; font-size: 78px; font-weight: 570; line-height: 96px; letter-spacing: -2.900px; text-align: center; }
.row { display: grid; align-items: center; height: 48px; white-space: nowrap; }
.row label { letter-spacing: -.3px; padding-top: 1px; }
.row label.or { letter-spacing: 0; padding-left: 8px; }
.year { grid-template-columns: 194px 63px; }
.restrict { grid-template-columns: 404px 931px 239px 931px 184px 230px; }
.terms { grid-template-columns: 216px 349px; height: 60px; margin-top: 32px; }
.submit { grid-template-columns: 83px 134px; gap: 9px; padding-left: 8px; height: 60px; margin: 32px 0; }
.select {
  height: 43px;
  border: 2px solid #767676;
  border-radius: 5px;
  color: #000;
  display: flex;
  align-items: center;
  justify-content: space-between;
  padding: 0 6px 0 8px;
}
.restrict .select { letter-spacing: -.5px; }
.select svg { width: 20px; height: 12px; fill: none; stroke: #000; stroke-width: 4; }
input, button { font: inherit; letter-spacing: -.6px; color: #000; border: 2px solid #767676; border-radius: 5px; height: 60px; margin: 0; }
input { width: 349px; padding: 0 6px; background: #fff; }
button { width: 134px; padding: 0; background: #efefef; }

table { width: 3360px; table-layout: fixed; border: 2px solid #2c2f33; border-collapse: separate; border-spacing: 0; }
.c1 { width: 170px; }
.c2 { width: 247px; }
.c3 { width: 266px; }
.c4 { width: 2253px; }
.c5 { width: 287px; }
.c6 { width: 133px; }
th, td { padding: 3px 2px 1px; vertical-align: middle; }
th { text-align: right; font-weight: 700; letter-spacing: .3px; }
th:first-child { letter-spacing: 0; }
td { white-space: nowrap; }
td.name { letter-spacing: -.28px; }
td.division { letter-spacing: -.38px; }
td.department { letter-spacing: -.36px; }
td.code { letter-spacing: .2px; }
a { color: #2a6ff5; text-decoration: underline; text-decoration-thickness: 2px; text-underline-offset: 4px; }

.dock {
  position: absolute;
  left: 432px;
  top: 1962px;
  width: 2496px;
  height: 128px;
  border: 2px solid rgba(255, 255, 255, .17);
  border-radius: 42px;
  display: flex;
  padding-left: 3px;
  box-shadow: 0 0 0 1px rgba(0, 0, 0, .5), 0 0 50px rgba(0, 0, 0, .32);
  background:
    radial-gradient(ellipse 180px 120px at 380px 128px, rgba(90, 36, 170, .6), transparent),
    radial-gradient(ellipse 260px 120px at 900px 110px, rgba(84, 48, 160, .5), transparent),
    linear-gradient(90deg, #1d3f6c 0, #21436f 120px, #33306c 230px, #45256a 330px, #3c2a68 480px, #2c2846 620px, #37305c 760px, #46256b 850px, #34182c 980px, #2b1720 1150px, #2b2226 1330px, #43502c 1450px, #2c3a20 1580px, #342218 1720px, #402018 1900px, #3c2818 2020px, #4a201a 2160px, #663216 2240px, #74401a 2400px, #7a4018 2496px);
}
.defs { position: absolute; }
.app { position: relative; width: 106px; height: 124px; padding: 7px 3px 0; flex: none; }
.app text { font-family: Inter, sans-serif; }
.app .mono { font-family: "Liberation Mono", monospace; }
.dot { position: absolute; left: 49px; top: 114px; width: 8px; height: 8px; border-radius: 50%; background: rgba(225, 205, 225, .75); }
.badge {
  position: absolute;
  left: 69px;
  top: 8px;
  width: 38px;
  height: 38px;
  border-radius: 19px;
  background: #e24d3f;
  color: #fff;
  font-size: 19px;
  line-height: 38px;
  text-align: center;
}
.badge.wide { left: 61px; width: 46px; font-size: 20px; letter-spacing: -.8px; }
.divider { width: 2px; height: 96px; background: rgba(255, 255, 255, .32); margin: 15px 20px 0 25px; flex: none; }
</style>
